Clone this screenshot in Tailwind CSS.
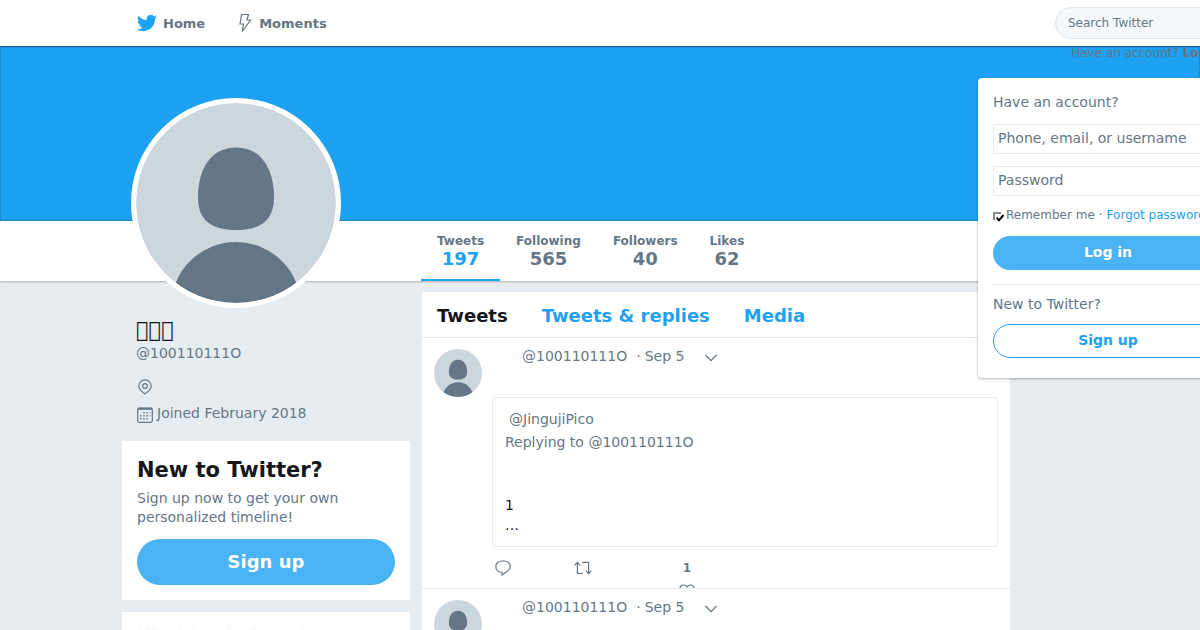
<!DOCTYPE html>
<html lang="en">

<head>
    <meta charset="UTF-8">
    <meta name="viewport" content="width=device-width, initial-scale=1.0">
    <title>@100110111O | Twitter</title>
    <script src="https://cdn.jsdelivr.net/npm/@tailwindcss/browser@4"></script>
</head>

<body class="min-h-screen overflow-hidden bg-[#e6ecf0] font-['DejaVu_Sans',sans-serif] text-sm text-[#657786]">

    <!-- shared icons -->
    <svg class="hidden">
        <symbol id="avatar" viewBox="0 0 200 200">
            <rect width="200" height="200" fill="#ccd6dd" />
            <path fill="#657786" d="M100 44.500c25 0 38 21 38 50 0 24-15 32.500-38 32.500s-38-8.500-38-32.500c0-29 13-50 38-50z" />
            <circle cx="100" cy="204" r="65" fill="#657786" />
        </symbol>
        <symbol id="caret" viewBox="0 0 14 8">
            <path fill="none" stroke="#657786" stroke-width="1.300" d="M1.500 1l5.500 5.600L12.500 1" />
        </symbol>
        <symbol id="reply" viewBox="0 0 16 16">
            <path fill="none" stroke="#657786" stroke-width="1.200"
                d="M7 12.300C3 12.300.8 9.600.8 6.500.8 3.200 3.500 1 6.600 1h2.800c3.200 0 5.800 2.300 5.800 5.300 0 2.500-1.500 4.200-3.600 5.500L7 15z" />
        </symbol>
        <symbol id="retweet" viewBox="0 0 18 14">
            <path fill="none" stroke="#657786" stroke-width="1.200" d="M.600 4.400L3.400 1.300l2.800 3.100M3.400 1.500v11h5.400M11.800 9.600l2.800 3.100 2.800-3.100M14.600 12.500v-11.200H8.200" />
        </symbol>
        <symbol id="heart" viewBox="0 0 16 14">
            <path fill="none" stroke="#657786" stroke-width="1.200" d="M8 13C3.500 10 1 7.500 1 4.500 1 2.500 2.500 1 4.500 1 6 1 7.200 1.800 8 3c.8-1.200 2-2 3.500-2 2 0 3.500 1.500 3.500 3.500 0 3-2.500 5.500-7 8.500z" />
        </symbol>
    </svg>

    <header class="relative z-10 flex h-[46px] items-center justify-between bg-white pl-[137px] shadow-[0_1px_1px_rgba(0,0,0,0.35)]">
        <nav class="flex items-center gap-8 text-[13px] font-bold text-[#66757f]">
            <a href="#" class="flex items-center gap-1.5">
                <svg class="size-5" viewBox="0 0 24 24" fill="#1da1f2">
                    <path d="M23.953 4.570a10 10 0 01-2.825.775 4.958 4.958 0 002.163-2.723c-.951.555-2.005.959-3.127 1.184a4.920 4.920 0 00-8.384 4.482C7.690 8.095 4.067 6.130 1.640 3.162a4.822 4.822 0 00-.666 2.475c0 1.710.870 3.213 2.188 4.096a4.904 4.904 0 01-2.228-.616v.060a4.923 4.923 0 003.946 4.827 4.996 4.996 0 01-2.212.085 4.936 4.936 0 004.604 3.417 9.867 9.867 0 01-6.102 2.105c-.390 0-.779-.023-1.170-.067a13.995 13.995 0 007.557 2.209c9.053 0 13.998-7.496 13.998-13.985 0-.210 0-.420-.015-.630A9.935 9.935 0 0024 4.590z" />
                </svg>
                <span class="pt-0.5">Home</span>
            </a>
            <a href="#" class="flex items-center gap-1.5">
                <svg class="h-5 w-4" viewBox="0 0 16 20" fill="none" stroke="#66757f" stroke-width="1.200">
                    <path d="M4.500 1.500h7L10 7h3.500L5.300 18.500 6.500 11H3z" />
                </svg>
                <span class="pt-0.5">Moments</span>
            </a>
        </nav>
        <input type="search" aria-label="Search Twitter" placeholder="Search Twitter"
            class="-mr-[75px] h-8 w-[220px] rounded-full border border-[#e1e8ed] bg-[#f5f8fa] px-3 text-xs placeholder:text-[#657786]">

        <div class="absolute top-[46px] -right-6 text-xs leading-[14px] text-[#66757f]">
            Have an account? <button class="font-bold">Log in</button>
        </div>

        <!-- login dropdown -->
        <form class="absolute top-[78px] -right-[38px] w-[260px] rounded-[4px] bg-white px-[15px] pt-[15px] pb-5 shadow-[0_1px_3px_rgba(0,0,0,0.3)]">
            <p class="mb-3 leading-[19px]">Have an account?</p>
            <input type="text" aria-label="Phone, email, or username" placeholder="Phone, email, or username"
                class="mb-3 block h-[30px] w-full rounded-[3px] border border-[#e6ecf0] px-1 pb-0.5 placeholder:text-[#657786]">
            <input type="password" aria-label="Password" placeholder="Password"
                class="mb-3 block h-[30px] w-full rounded-[3px] border border-[#e6ecf0] px-1 pb-0.5 placeholder:text-[#657786]">
            <div class="mb-3 flex h-4 items-center pb-0.5 text-xs whitespace-nowrap">
                <label class="flex items-center gap-[3px]">
                    <span class="relative mt-1 size-2.5">
                        <input type="checkbox" checked class="block size-2 appearance-none border-t-2 border-l-2 border-[#8a8a8a]">
                        <svg class="absolute top-[2px] left-[3px] h-2 w-2" viewBox="0 0 8 8" fill="none" stroke="#000" stroke-width="2">
                            <path d="M.500 3.500l2.500 2.800L7.500 1" />
                        </svg>
                    </span>
                    Remember me
                </label>
                <span class="mx-1">·</span>
                <a href="#" class="text-[#1da1f2]">Forgot password?</a>
            </div>
            <button type="button" class="block h-[34px] w-full rounded-full bg-[#4ab3f4] pb-0.5 font-bold text-white">Log in</button>
            <p class="mt-3.5 mb-2.5 border-t border-[#e6ecf0] pt-2.5 leading-[19px]">New to Twitter?</p>
            <button type="button" class="block h-[34px] w-full rounded-full border border-[#1da1f2] pb-0.5 font-bold text-[#1da1f2]">Sign up</button>
        </form>
    </header>

    <div class="h-[175px] bg-[#1da1f2] shadow-[inset_0_0_2px_rgba(0,0,0,0.5)]"></div>

    <div class="relative flex h-[60px] bg-white pl-[421px] shadow-[0_1px_2px_rgba(0,0,0,0.25)]">
        <a href="#" aria-label="Profile photo" class="absolute bottom-[-27px] left-[131px] size-[210px] overflow-hidden rounded-full border-5 border-white bg-white">
            <svg class="size-full rounded-full"><use href="#avatar" /></svg>
        </a>
        <nav class="flex text-center text-xs font-bold text-[#657786]">
            <a href="#" class="border-b-2 border-[#1da1f2] px-4 pt-3">
                <span class="block leading-4">Tweets</span>
                <span class="block text-lg leading-5 text-[#1da1f2]">197</span>
            </a>
            <a href="#" class="px-4 pt-3">
                <span class="block leading-4">Following</span>
                <span class="block text-lg leading-5">565</span>
            </a>
            <a href="#" class="px-4 pt-3">
                <span class="block leading-4">Followers</span>
                <span class="block text-lg leading-5">40</span>
            </a>
            <a href="#" class="px-4 pt-3">
                <span class="block leading-4">Likes</span>
                <span class="block text-lg leading-5">62</span>
            </a>
        </nav>
    </div>

    <div class="grid h-[349px] grid-cols-[288px_588px] gap-3 overflow-hidden pt-[11px] pl-[122px]">

        <aside>
            <div class="px-3.5 pt-[26px] pb-[18px]">
                <h1 class="text-[21px] leading-6 text-[#14171a]">&#xE900;&#xE900;&#xE900;</h1>
                <a href="#" class="mt-px block leading-5">@100110111O</a>
                <p class="mt-3.5 flex h-5 items-center">
                    <svg class="ml-px size-4" viewBox="0 0 16 16" fill="none" stroke="#657786" stroke-width="1.200">
                        <path d="M8 15C4.500 12.500 1.800 10 1.800 7a6.200 6.200 0 0112.400 0c0 3-2.700 5.500-6.200 8z" />
                        <circle cx="8" cy="7" r="2.400" />
                    </svg>
                </p>
                <p class="mt-1.5 flex h-5 items-center gap-1">
                    <svg class="mt-1 ml-px size-4" viewBox="0 0 16 16" fill="none" stroke="#657786">
                        <rect x=".700" y="1" width="14.600" height="14.300" rx="1.500" stroke-width="1.200" />
                        <path d="M1 1.800h14" stroke-width="2" />
                        <path d="M6.300 5.700h7M3 8.700h10.300M3 11.700h8" stroke-width="1.400" stroke-dasharray="1.400 1.800" />
                    </svg>
                    Joined February 2018
                </p>
            </div>

            <section class="bg-white p-[15px]">
                <h2 class="text-[21px] leading-7 font-bold text-[#14171a]">New to Twitter?</h2>
                <p class="mt-[5px] leading-[19px]">Sign up now to get your own personalized timeline!</p>
                <button class="mt-3 block h-[46px] w-full rounded-full bg-[#4ab3f4] text-lg font-bold text-white">Sign up</button>
            </section>

            <section class="mt-3 bg-white px-[15px] pt-2 pb-[15px]">
                <h2 class="text-lg font-bold text-[#fafbfc]">Worldwide trends</h2>
            </section>
        </aside>

        <main class="bg-white">
            <nav class="flex h-[45px] items-center gap-[34px] px-[15px] pt-0.5 text-lg font-bold text-[#1da1f2]">
                <h2 class="text-[#14171a]">Tweets</h2>
                <a href="#">Tweets &amp; replies</a>
                <a href="#">Media</a>
            </nav>

            <article class="flex gap-2.5 border-t border-[#e6ecf0] px-3 pt-[11px]">
                <svg class="size-12 shrink-0 rounded-full"><use href="#avatar" /></svg>
                <div class="grow">
                    <div class="flex h-3.5 items-center pl-[30px] leading-[14px]">
                        <a href="#">@100110111O</a>
                        <span class="ml-[9px]">·</span>
                        <a href="#" class="ml-1">Sep 5</a>
                        <button aria-label="More" class="mt-1 ml-5"><svg class="h-2 w-3.5"><use href="#caret" /></svg></button>
                    </div>
                    <div class="mt-[34px] h-[150px] rounded-[4px] border border-[#e6ecf0] px-3 pt-[9px]">
                        <a href="#" class="block pl-1 leading-6">@JingujiPico</a>
                        <p class="leading-[22px]">Replying to <a href="#">@100110111O</a></p>
                        <p class="mt-[42px] leading-5 text-[#14171a]">1<br>…</p>
                    </div>
                    <div class="flex h-[41px] items-start overflow-hidden pt-[13px]">
                        <button aria-label="Reply" class="w-20 pl-[3px]"><svg class="size-4"><use href="#reply" /></svg></button>
                        <button aria-label="Retweet" class="w-[107px] pt-px pl-0.5"><svg class="h-3.5 w-[18px]"><use href="#retweet" /></svg></button>
                        <button aria-label="Like" class="flex flex-col items-center gap-2 text-xs font-bold">
                            <span>1</span>
                            <svg class="h-3.5 w-4"><use href="#heart" /></svg>
                        </button>
                    </div>
                </div>
            </article>

            <article class="flex gap-2.5 border-t border-[#e6ecf0] px-3 pt-[11px]">
                <svg class="size-12 shrink-0 rounded-full"><use href="#avatar" /></svg>
                <div class="grow">
                    <div class="flex h-3.5 items-center pl-[30px] leading-[14px]">
                        <a href="#">@100110111O</a>
                        <span class="ml-[9px]">·</span>
                        <a href="#" class="ml-1">Sep 5</a>
                        <button aria-label="More" class="mt-1 ml-5"><svg class="h-2 w-3.5"><use href="#caret" /></svg></button>
                    </div>
                </div>
            </article>
        </main>
    </div>
</body>

</html>
